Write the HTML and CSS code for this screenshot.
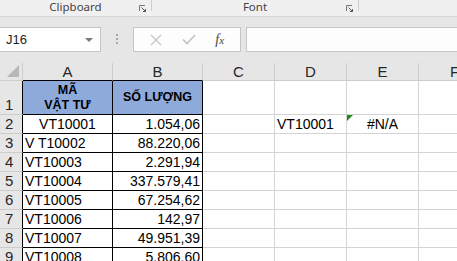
FILE: index.html
```html
<!DOCTYPE html>
<html lang="vi">
  <head>
    <meta charset="UTF-8" />
    <title>Excel sheet</title>
    <link rel="stylesheet" href="styles.css">
  </head>
  <body>
    <div class="ribbon">
      <div class="group group-clip">
        <span class="group-name">Clipboard</span>
        <svg class="launcher" width="7" height="7" viewBox="0 0 7 7">
          <path d="M0.5 6V0.5H6" fill="none" stroke="#777" />
          <path d="M2.5 2.5L6.5 6.5M4 6.5H6.5V4" fill="none" stroke="#555" />
        </svg>
      </div>
      <div class="group group-font">
        <span class="group-name">Font</span>
        <svg class="launcher" width="7" height="7" viewBox="0 0 7 7">
          <path d="M0.5 6V0.5H6" fill="none" stroke="#777" />
          <path d="M2.5 2.5L6.5 6.5M4 6.5H6.5V4" fill="none" stroke="#555" />
        </svg>
      </div>
    </div>

    <div class="fbar">
      <div class="namebox">
        <span>J16</span>
        <span class="arrow"></span>
      </div>
      <div class="dots"><i></i><i></i><i></i></div>
      <div class="fbuttons">
        <svg width="12" height="12" viewBox="0 0 12 12">
          <path d="M1 1L11 11M11 1L1 11" stroke="#c4c4c4" stroke-width="1.3" />
        </svg>
        <svg width="14" height="11" viewBox="0 0 14 11">
          <path d="M1 5.5L5 9.5L13 1" fill="none" stroke="#c4c4c4" stroke-width="1.6" />
        </svg>
        <span class="fx">f<small>x</small></span>
      </div>
      <div class="formula"></div>
    </div>

    <div class="sheet">
      <div class="corner"><span class="tri"></span></div>
      <div class="colh ab">A</div>
      <div class="colh ab">B</div>
      <div class="colh">C</div>
      <div class="colh">D</div>
      <div class="colh">E</div>
      <div class="colh">F</div>

      <div class="rowh tb">1</div>
      <div class="c t head">MÃ<br />VẬT TƯ</div>
      <div class="c t head mid">SỐ LƯỢNG</div>
      <div class="c"></div><div class="c"></div><div class="c"></div><div class="c"></div>

      <div class="rowh tb">2</div>
      <div class="c t center">VT10001</div>
      <div class="c t num">1.054,06</div>
      <div class="c"></div>
      <div class="c">VT10001</div>
      <div class="c center err"><span class="flag"></span>#N/A</div>
      <div class="c"></div>

      <div class="rowh tb">3</div>
      <div class="c t">V T10002</div>
      <div class="c t num">88.220,06</div>
      <div class="c"></div><div class="c"></div><div class="c"></div><div class="c"></div>

      <div class="rowh tb">4</div>
      <div class="c t">VT10003</div>
      <div class="c t num">2.291,94</div>
      <div class="c"></div><div class="c"></div><div class="c"></div><div class="c"></div>

      <div class="rowh tb">5</div>
      <div class="c t">VT10004</div>
      <div class="c t num">337.579,41</div>
      <div class="c"></div><div class="c"></div><div class="c"></div><div class="c"></div>

      <div class="rowh tb">6</div>
      <div class="c t">VT10005</div>
      <div class="c t num">67.254,62</div>
      <div class="c"></div><div class="c"></div><div class="c"></div><div class="c"></div>

      <div class="rowh tb">7</div>
      <div class="c t">VT10006</div>
      <div class="c t num">142,97</div>
      <div class="c"></div><div class="c"></div><div class="c"></div><div class="c"></div>

      <div class="rowh tb">8</div>
      <div class="c t">VT10007</div>
      <div class="c t num">49.951,39</div>
      <div class="c"></div><div class="c"></div><div class="c"></div><div class="c"></div>

      <div class="rowh tb">9</div>
      <div class="c t">VT10008</div>
      <div class="c t num">5.806,60</div>
      <div class="c"></div><div class="c"></div><div class="c"></div><div class="c"></div>
    </div>
  </body>
</html>
```

FILE: styles.css
```css
html,
body {
  margin: 0;
  width: 457px;
  height: 261px;
  overflow: hidden;
  background: #ffffff;
}

.ribbon {
  display: flex;
  height: 16px;
  background: #f0f0f0;
  border-bottom: 1px solid #d6d6d6;
  font-family: "Noto Sans", sans-serif;
  font-size: 11.5px;
  color: #444444;
}

.group {
  position: relative;
  display: flex;
  justify-content: center;
  border-right: 1px solid #cfcfcf;
  height: 11px;
  box-sizing: border-box;
}

.group-clip {
  width: 152px;
}

.group-font {
  width: 207px;
}

.group-name {
  line-height: 15px;
  margin-top: -1px;
}

.launcher {
  position: absolute;
  right: 5px;
  top: 5px;
}

.fbar {
  display: flex;
  align-items: flex-start;
  height: 46px;
  padding-top: 10px;
  box-sizing: border-box;
  background: #e6e6e6;
  font-family: "Liberation Sans", Arial, sans-serif;
}

.namebox {
  display: flex;
  align-items: center;
  justify-content: space-between;
  width: 101px;
  height: 25px;
  box-sizing: border-box;
  padding: 0 7px 0 6px;
  background: #ffffff;
  border: 1px solid #c6c6c6;
  border-left: none;
  font-size: 13px;
  color: #222222;
}

.arrow {
  width: 0;
  height: 0;
  border-left: 4px solid transparent;
  border-right: 4px solid transparent;
  border-top: 4px solid #7a7a7a;
}

.dots {
  display: flex;
  flex-direction: column;
  gap: 2px;
  width: 32px;
  align-items: center;
  padding-top: 7px;
}

.dots i {
  width: 2px;
  height: 2px;
  background: #a8a8a8;
}

.fbuttons {
  display: flex;
  align-items: center;
  justify-content: space-around;
  width: 108px;
  height: 25px;
  box-sizing: border-box;
  padding: 0 6px;
  background: #fdfdfd;
  border: 1px solid #c6c6c6;
}

.fx {
  font-family: "Liberation Serif", serif;
  font-style: italic;
  font-size: 14px;
  color: #444444;
}

.fx small {
  font-size: 11px;
}

.formula {
  flex: 1;
  margin-left: 5px;
  height: 25px;
  box-sizing: border-box;
  background: #fdfdfd;
  border: 1px solid #c6c6c6;
  border-right: none;
}

.sheet {
  display: grid;
  width: 491px;
  grid-template-columns: 23px 90px 90px 72px 72px 72px 72px;
  grid-template-rows: 18px 34px repeat(8, 19px);
  font-family: "Liberation Sans", Arial, sans-serif;
  font-size: 14px;
  color: #000000;
}

.corner,
.colh,
.rowh {
  background: #e6e6e6;
  color: #262626;
  box-sizing: border-box;
  border-right: 1px solid #cdcdcd;
  border-bottom: 1px solid #cdcdcd;
}

.corner {
  position: relative;
}

.tri {
  position: absolute;
  right: 3px;
  bottom: 3px;
  width: 0;
  height: 0;
  border-left: 12px solid transparent;
  border-bottom: 12px solid #b8b8b8;
}

.colh {
  text-align: center;
  font-size: 15px;
  line-height: 18px;
}

.colh.ab {
  border-bottom-color: #000000;
}

.rowh {
  display: flex;
  align-items: flex-end;
  padding-left: 5px;
  font-size: 15px;
  line-height: 18px;
}

.rowh.tb {
  border-right-color: #000000;
}

.c {
  position: relative;
  box-sizing: border-box;
  border-right: 1px solid #d4d4d4;
  border-bottom: 1px solid #d4d4d4;
  padding: 0 2px;
  display: flex;
  align-items: flex-end;
  line-height: 17px;
  white-space: nowrap;
}

.c.t {
  border-right-color: #000000;
  border-bottom-color: #000000;
}

.head {
  background: #8eaadb;
  font-weight: bold;
  font-size: 12.5px;
  justify-content: center;
  text-align: center;
  line-height: 15px;
  padding-bottom: 1px;
}

.head.mid {
  align-items: center;
}

.center {
  justify-content: center;
}

.num {
  justify-content: flex-end;
}

.flag {
  position: absolute;
  left: 0;
  top: 0;
  width: 0;
  height: 0;
  border-top: 6px solid #1e8a1e;
  border-right: 6px solid transparent;
}
```
